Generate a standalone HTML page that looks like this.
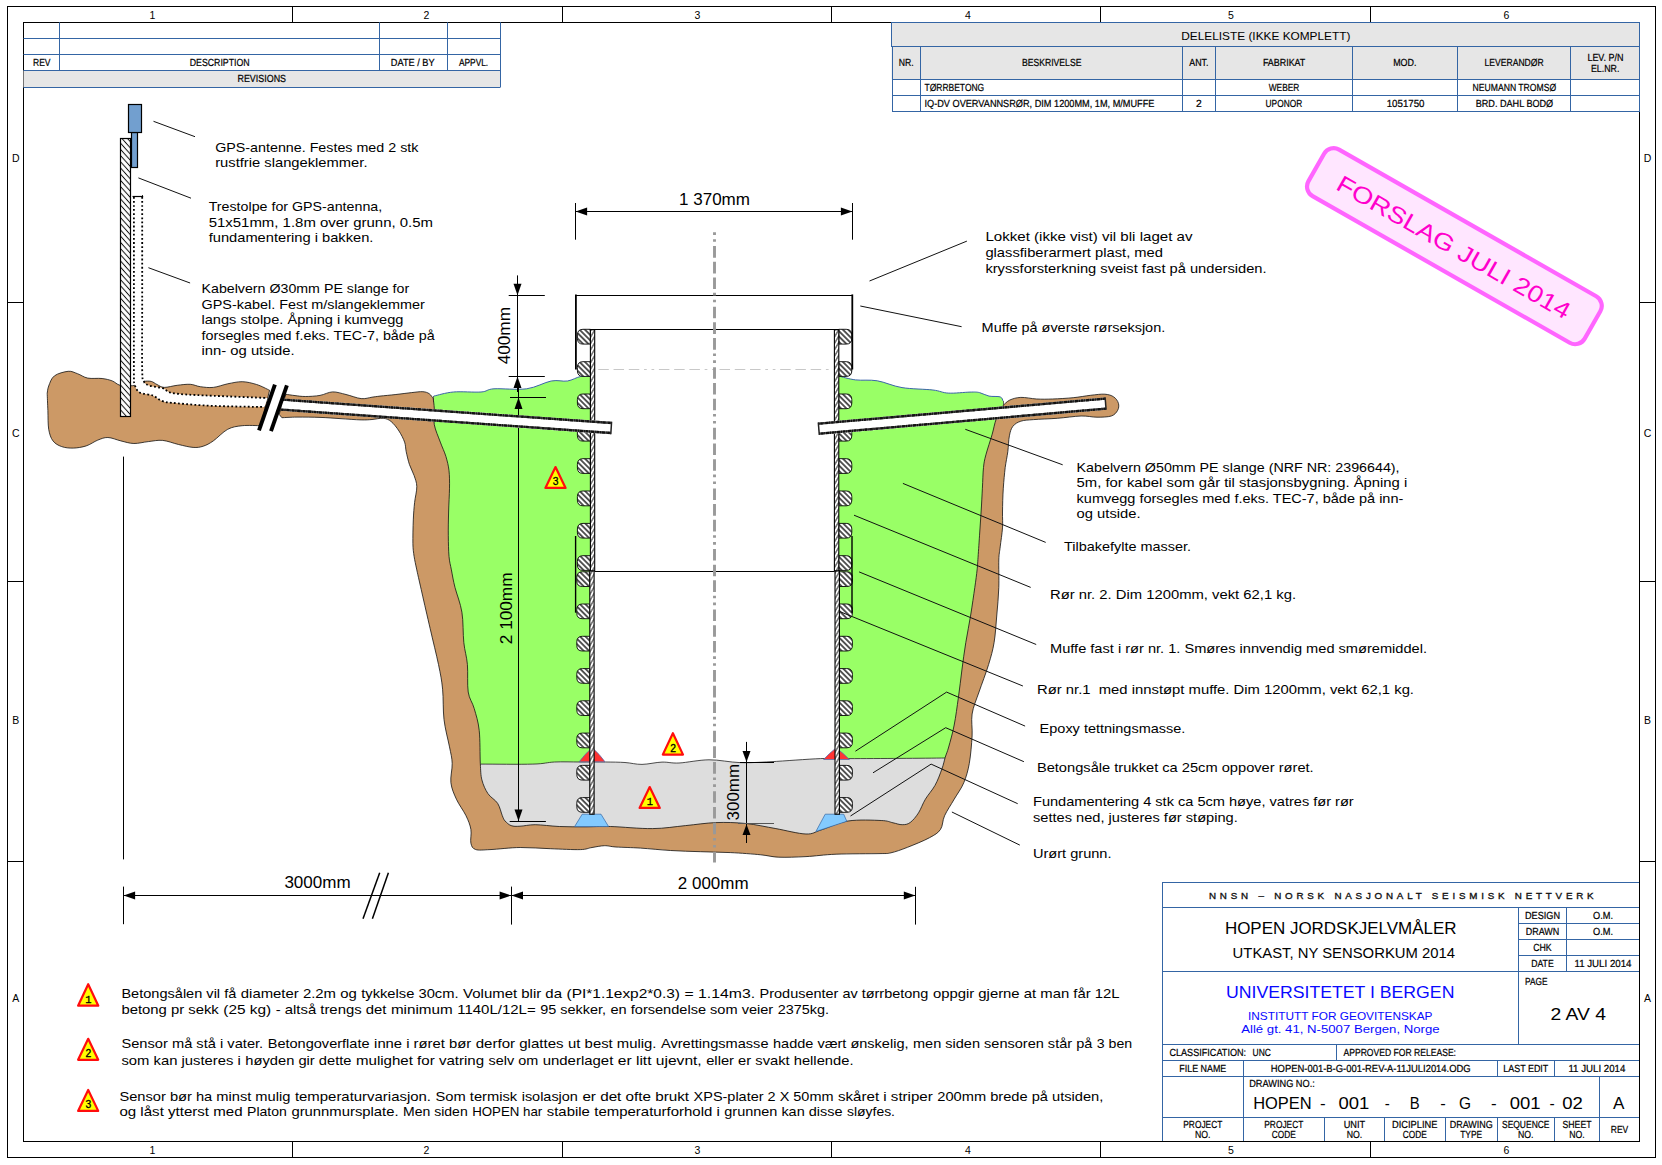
<!DOCTYPE html>
<html><head><meta charset="utf-8"><title>HOPEN sensorkum</title>
<style>
html,body{margin:0;padding:0;background:#fff;}
body{width:1662px;height:1165px;overflow:hidden;}
svg{display:block;font-family:"Liberation Sans",sans-serif;}
</style></head><body>
<svg width="1662" height="1165" viewBox="0 0 1662 1165">
<defs>
<pattern id="hR" width="3.8" height="3.8" patternUnits="userSpaceOnUse" patternTransform="rotate(-45)"><rect width="3.8" height="3.8" fill="#fff"/><line x1="1.9" y1="-1" x2="1.9" y2="5" stroke="#000" stroke-width="1.3"/></pattern>
<pattern id="hP" width="4.15" height="4.15" patternUnits="userSpaceOnUse" patternTransform="rotate(-42)"><rect width="4.15" height="4.15" fill="#fff"/><line x1="2.07" y1="-1" x2="2.07" y2="6" stroke="#111" stroke-width="1.0"/></pattern>
<pattern id="hW" width="3.2" height="3.2" patternUnits="userSpaceOnUse" patternTransform="rotate(-60)"><rect width="3.2" height="3.2" fill="#fff"/><line x1="-1" y1="1.6" x2="5" y2="1.6" stroke="#000" stroke-width="0.85"/></pattern>
</defs>
<rect width="1662" height="1165" fill="#fff"/>
<rect x="1162.5" y="882.5" width="477.0" height="259.0" fill="#fff" stroke="#3465a4" stroke-width="1" />
<line x1="1162.3" y1="907.5" x2="1639.5" y2="907.5" stroke="#3465a4" stroke-width="1" />
<line x1="1162.3" y1="971.5" x2="1639.5" y2="971.5" stroke="#3465a4" stroke-width="1" />
<line x1="1162.3" y1="1044.5" x2="1639.5" y2="1044.5" stroke="#3465a4" stroke-width="1" />
<line x1="1162.3" y1="1060.5" x2="1639.5" y2="1060.5" stroke="#3465a4" stroke-width="1" />
<line x1="1162.3" y1="1076.5" x2="1639.5" y2="1076.5" stroke="#3465a4" stroke-width="1" />
<line x1="1162.3" y1="1117.5" x2="1639.5" y2="1117.5" stroke="#3465a4" stroke-width="1" />
<line x1="1518.5" y1="907.6" x2="1518.5" y2="1044.4" stroke="#3465a4" stroke-width="1" />
<line x1="1566.5" y1="907.6" x2="1566.5" y2="971.0" stroke="#3465a4" stroke-width="1" />
<line x1="1518.5" y1="923.5" x2="1639.5" y2="923.5" stroke="#3465a4" stroke-width="1" />
<line x1="1518.5" y1="939.5" x2="1639.5" y2="939.5" stroke="#3465a4" stroke-width="1" />
<line x1="1518.5" y1="955.5" x2="1639.5" y2="955.5" stroke="#3465a4" stroke-width="1" />
<line x1="1336.5" y1="1044.4" x2="1336.5" y2="1060.4" stroke="#3465a4" stroke-width="1" />
<line x1="1243.5" y1="1060.4" x2="1243.5" y2="1076.4" stroke="#3465a4" stroke-width="1" />
<line x1="1497.5" y1="1060.4" x2="1497.5" y2="1076.4" stroke="#3465a4" stroke-width="1" />
<line x1="1554.5" y1="1060.4" x2="1554.5" y2="1076.4" stroke="#3465a4" stroke-width="1" />
<line x1="1243.5" y1="1076.4" x2="1243.5" y2="1141.0" stroke="#3465a4" stroke-width="1" />
<line x1="1599.5" y1="1076.4" x2="1599.5" y2="1141.0" stroke="#3465a4" stroke-width="1" />
<line x1="1324.5" y1="1117.4" x2="1324.5" y2="1141.0" stroke="#3465a4" stroke-width="1" />
<line x1="1384.5" y1="1117.4" x2="1384.5" y2="1141.0" stroke="#3465a4" stroke-width="1" />
<line x1="1445.5" y1="1117.4" x2="1445.5" y2="1141.0" stroke="#3465a4" stroke-width="1" />
<line x1="1497.5" y1="1117.4" x2="1497.5" y2="1141.0" stroke="#3465a4" stroke-width="1" />
<line x1="1554.5" y1="1117.4" x2="1554.5" y2="1141.0" stroke="#3465a4" stroke-width="1" />
<text x="1209.0" y="898.7" font-size="9.8" textLength="384.6" lengthAdjust="spacing" fill="#111" stroke="#111" stroke-width="0.35">NNSN – NORSK NASJONALT SEISMISK NETTVERK</text>
<text x="1224.9" y="934.0" font-size="17" textLength="231.6" lengthAdjust="spacingAndGlyphs">HOPEN JORDSKJELVMÅLER</text>
<text x="1232.6" y="958.1" font-size="15" textLength="222.4" lengthAdjust="spacingAndGlyphs">UTKAST, NY SENSORKUM 2014</text>
<text x="1226.0" y="997.8" font-size="17" textLength="228.4" lengthAdjust="spacingAndGlyphs" fill="#0808ff">UNIVERSITETET I BERGEN</text>
<text x="1248.0" y="1020.0" font-size="11.5" textLength="184.5" lengthAdjust="spacingAndGlyphs" fill="#0808ff">INSTITUTT FOR GEOVITENSKAP</text>
<text x="1241.2" y="1032.7" font-size="11.5" textLength="198.4" lengthAdjust="spacingAndGlyphs" fill="#0808ff">Allé gt. 41, N-5007 Bergen, Norge</text>
<text x="1525.0" y="918.7" font-size="10.3" textLength="35.0" lengthAdjust="spacingAndGlyphs" stroke="#000" stroke-width="0.22" text-rendering="geometricPrecision">DESIGN</text>
<text x="1593.0" y="918.7" font-size="10.3" textLength="20.0" lengthAdjust="spacingAndGlyphs" stroke="#000" stroke-width="0.22" text-rendering="geometricPrecision">O.M.</text>
<text x="1525.8" y="934.7" font-size="10.3" textLength="33.5" lengthAdjust="spacingAndGlyphs" stroke="#000" stroke-width="0.22" text-rendering="geometricPrecision">DRAWN</text>
<text x="1593.0" y="934.7" font-size="10.3" textLength="20.0" lengthAdjust="spacingAndGlyphs" stroke="#000" stroke-width="0.22" text-rendering="geometricPrecision">O.M.</text>
<text x="1533.2" y="950.7" font-size="10.3" textLength="18.5" lengthAdjust="spacingAndGlyphs" stroke="#000" stroke-width="0.22" text-rendering="geometricPrecision">CHK</text>
<text x="1531.2" y="966.7" font-size="10.3" textLength="22.5" lengthAdjust="spacingAndGlyphs" stroke="#000" stroke-width="0.22" text-rendering="geometricPrecision">DATE</text>
<text x="1574.5" y="966.7" font-size="10.3" textLength="57.0" lengthAdjust="spacingAndGlyphs" stroke="#000" stroke-width="0.22" text-rendering="geometricPrecision">11 JULI 2014</text>
<text x="1525.0" y="984.6" font-size="10.3" textLength="22.5" lengthAdjust="spacingAndGlyphs" stroke="#000" stroke-width="0.22" text-rendering="geometricPrecision">PAGE</text>
<text x="1550.5" y="1020.0" font-size="17" textLength="55.5" lengthAdjust="spacingAndGlyphs">2 AV 4</text>
<text x="1169.4" y="1055.8" font-size="10.3" textLength="76.7" lengthAdjust="spacingAndGlyphs" stroke="#000" stroke-width="0.22" text-rendering="geometricPrecision">CLASSIFICATION:</text>
<text x="1252.6" y="1055.8" font-size="10.3" textLength="18.4" lengthAdjust="spacingAndGlyphs" stroke="#000" stroke-width="0.22" text-rendering="geometricPrecision">UNC</text>
<text x="1343.5" y="1055.8" font-size="10.3" textLength="112.5" lengthAdjust="spacingAndGlyphs" stroke="#000" stroke-width="0.22" text-rendering="geometricPrecision">APPROVED FOR RELEASE:</text>
<text x="1179.3" y="1071.8" font-size="10.3" textLength="47.0" lengthAdjust="spacingAndGlyphs" stroke="#000" stroke-width="0.22" text-rendering="geometricPrecision">FILE NAME</text>
<text x="1270.8" y="1071.8" font-size="10.3" textLength="199.9" lengthAdjust="spacingAndGlyphs" stroke="#000" stroke-width="0.22" text-rendering="geometricPrecision">HOPEN-001-B-G-001-REV-A-11JULI2014.ODG</text>
<text x="1503.3" y="1071.8" font-size="10.3" textLength="45.0" lengthAdjust="spacingAndGlyphs" stroke="#000" stroke-width="0.22" text-rendering="geometricPrecision">LAST EDIT</text>
<text x="1568.4" y="1071.8" font-size="10.3" textLength="57.0" lengthAdjust="spacingAndGlyphs" stroke="#000" stroke-width="0.22" text-rendering="geometricPrecision">11 JULI 2014</text>
<text x="1249.2" y="1086.6" font-size="10.3" textLength="65.6" lengthAdjust="spacingAndGlyphs" stroke="#000" stroke-width="0.22" text-rendering="geometricPrecision">DRAWING NO.:</text>
<text x="1253.2" y="1108.8" font-size="16" textLength="58.5" lengthAdjust="spacingAndGlyphs">HOPEN</text>
<text x="1320.0" y="1108.8" font-size="16" textLength="5.6" lengthAdjust="spacingAndGlyphs">-</text>
<text x="1338.5" y="1108.8" font-size="16" textLength="30.8" lengthAdjust="spacingAndGlyphs">001</text>
<text x="1384.7" y="1108.8" font-size="16" textLength="5.0" lengthAdjust="spacingAndGlyphs">-</text>
<text x="1409.7" y="1108.8" font-size="16" textLength="9.9" lengthAdjust="spacingAndGlyphs">B</text>
<text x="1440.2" y="1108.8" font-size="16" textLength="5.5" lengthAdjust="spacingAndGlyphs">-</text>
<text x="1459.0" y="1108.8" font-size="16" textLength="12.0" lengthAdjust="spacingAndGlyphs">G</text>
<text x="1491.0" y="1108.8" font-size="16" textLength="5.6" lengthAdjust="spacingAndGlyphs">-</text>
<text x="1509.8" y="1108.8" font-size="16" textLength="30.8" lengthAdjust="spacingAndGlyphs">001</text>
<text x="1549.6" y="1108.8" font-size="16" textLength="5.2" lengthAdjust="spacingAndGlyphs">-</text>
<text x="1562.2" y="1108.8" font-size="16" textLength="20.6" lengthAdjust="spacingAndGlyphs">02</text>
<text x="1613.0" y="1108.8" font-size="16" textLength="11.4" lengthAdjust="spacingAndGlyphs">A</text>
<text x="1183.3" y="1128.0" font-size="10.3" textLength="39.0" lengthAdjust="spacingAndGlyphs" stroke="#000" stroke-width="0.22" text-rendering="geometricPrecision">PROJECT</text>
<text x="1195.0" y="1137.6" font-size="10.3" textLength="15.5" lengthAdjust="spacingAndGlyphs" stroke="#000" stroke-width="0.22" text-rendering="geometricPrecision">NO.</text>
<text x="1264.3" y="1128.0" font-size="10.3" textLength="39.0" lengthAdjust="spacingAndGlyphs" stroke="#000" stroke-width="0.22" text-rendering="geometricPrecision">PROJECT</text>
<text x="1271.8" y="1137.6" font-size="10.3" textLength="24.0" lengthAdjust="spacingAndGlyphs" stroke="#000" stroke-width="0.22" text-rendering="geometricPrecision">CODE</text>
<text x="1343.7" y="1128.0" font-size="10.3" textLength="21.5" lengthAdjust="spacingAndGlyphs" stroke="#000" stroke-width="0.22" text-rendering="geometricPrecision">UNIT</text>
<text x="1346.7" y="1137.6" font-size="10.3" textLength="15.5" lengthAdjust="spacingAndGlyphs" stroke="#000" stroke-width="0.22" text-rendering="geometricPrecision">NO.</text>
<text x="1392.0" y="1128.0" font-size="10.3" textLength="45.5" lengthAdjust="spacingAndGlyphs" stroke="#000" stroke-width="0.22" text-rendering="geometricPrecision">DICIPLINE</text>
<text x="1402.8" y="1137.6" font-size="10.3" textLength="24.0" lengthAdjust="spacingAndGlyphs" stroke="#000" stroke-width="0.22" text-rendering="geometricPrecision">CODE</text>
<text x="1449.7" y="1128.0" font-size="10.3" textLength="43.0" lengthAdjust="spacingAndGlyphs" stroke="#000" stroke-width="0.22" text-rendering="geometricPrecision">DRAWING</text>
<text x="1460.2" y="1137.6" font-size="10.3" textLength="22.0" lengthAdjust="spacingAndGlyphs" stroke="#000" stroke-width="0.22" text-rendering="geometricPrecision">TYPE</text>
<text x="1502.0" y="1128.0" font-size="10.3" textLength="47.5" lengthAdjust="spacingAndGlyphs" stroke="#000" stroke-width="0.22" text-rendering="geometricPrecision">SEQUENCE</text>
<text x="1518.0" y="1137.6" font-size="10.3" textLength="15.5" lengthAdjust="spacingAndGlyphs" stroke="#000" stroke-width="0.22" text-rendering="geometricPrecision">NO.</text>
<text x="1562.5" y="1128.0" font-size="10.3" textLength="29.0" lengthAdjust="spacingAndGlyphs" stroke="#000" stroke-width="0.22" text-rendering="geometricPrecision">SHEET</text>
<text x="1569.2" y="1137.6" font-size="10.3" textLength="15.5" lengthAdjust="spacingAndGlyphs" stroke="#000" stroke-width="0.22" text-rendering="geometricPrecision">NO.</text>
<text x="1610.8" y="1132.9" font-size="10.3" textLength="17.5" lengthAdjust="spacingAndGlyphs" stroke="#000" stroke-width="0.22" text-rendering="geometricPrecision">REV</text>
<rect x="7.5" y="6.5" width="1648.0" height="1151.0" fill="none" stroke="#000" stroke-width="1" />
<rect x="23.5" y="22.5" width="1616.0" height="1119.0" fill="none" stroke="#000" stroke-width="1" />
<line x1="292.5" y1="6.5" x2="292.5" y2="22.5" stroke="#000" stroke-width="1" />
<line x1="292.5" y1="1141.0" x2="292.5" y2="1157.5" stroke="#000" stroke-width="1" />
<line x1="562.5" y1="6.5" x2="562.5" y2="22.5" stroke="#000" stroke-width="1" />
<line x1="562.5" y1="1141.0" x2="562.5" y2="1157.5" stroke="#000" stroke-width="1" />
<line x1="831.5" y1="6.5" x2="831.5" y2="22.5" stroke="#000" stroke-width="1" />
<line x1="831.5" y1="1141.0" x2="831.5" y2="1157.5" stroke="#000" stroke-width="1" />
<line x1="1100.5" y1="6.5" x2="1100.5" y2="22.5" stroke="#000" stroke-width="1" />
<line x1="1100.5" y1="1141.0" x2="1100.5" y2="1157.5" stroke="#000" stroke-width="1" />
<line x1="1370.5" y1="6.5" x2="1370.5" y2="22.5" stroke="#000" stroke-width="1" />
<line x1="1370.5" y1="1141.0" x2="1370.5" y2="1157.5" stroke="#000" stroke-width="1" />
<line x1="7.5" y1="302.5" x2="23.5" y2="302.5" stroke="#000" stroke-width="1" />
<line x1="1639.5" y1="302.5" x2="1655.5" y2="302.5" stroke="#000" stroke-width="1" />
<line x1="7.5" y1="581.5" x2="23.5" y2="581.5" stroke="#000" stroke-width="1" />
<line x1="1639.5" y1="581.5" x2="1655.5" y2="581.5" stroke="#000" stroke-width="1" />
<line x1="7.5" y1="861.5" x2="23.5" y2="861.5" stroke="#000" stroke-width="1" />
<line x1="1639.5" y1="861.5" x2="1655.5" y2="861.5" stroke="#000" stroke-width="1" />
<text x="152.3" y="18.8" font-size="10.5" text-anchor="middle">1</text>
<text x="152.3" y="1153.6" font-size="10.5" text-anchor="middle">1</text>
<text x="426.5" y="18.8" font-size="10.5" text-anchor="middle">2</text>
<text x="426.5" y="1153.6" font-size="10.5" text-anchor="middle">2</text>
<text x="697.3" y="18.8" font-size="10.5" text-anchor="middle">3</text>
<text x="697.3" y="1153.6" font-size="10.5" text-anchor="middle">3</text>
<text x="968.0" y="18.8" font-size="10.5" text-anchor="middle">4</text>
<text x="968.0" y="1153.6" font-size="10.5" text-anchor="middle">4</text>
<text x="1231.0" y="18.8" font-size="10.5" text-anchor="middle">5</text>
<text x="1231.0" y="1153.6" font-size="10.5" text-anchor="middle">5</text>
<text x="1506.3" y="18.8" font-size="10.5" text-anchor="middle">6</text>
<text x="1506.3" y="1153.6" font-size="10.5" text-anchor="middle">6</text>
<text x="15.7" y="161.8" font-size="10.5" text-anchor="middle">D</text>
<text x="1647.6" y="161.8" font-size="10.5" text-anchor="middle">D</text>
<text x="15.7" y="437.0" font-size="10.5" text-anchor="middle">C</text>
<text x="1647.6" y="437.0" font-size="10.5" text-anchor="middle">C</text>
<text x="15.7" y="724.0" font-size="10.5" text-anchor="middle">B</text>
<text x="1647.6" y="724.0" font-size="10.5" text-anchor="middle">B</text>
<text x="15.7" y="1002.3" font-size="10.5" text-anchor="middle">A</text>
<text x="1647.6" y="1002.3" font-size="10.5" text-anchor="middle">A</text>
<rect x="23.5" y="70.4" width="476.8" height="16.9" fill="#e6e6e6" stroke="none" stroke-width="1" />
<line x1="23.5" y1="38.5" x2="500.3" y2="38.5" stroke="#3465a4" stroke-width="1" />
<line x1="23.5" y1="54.5" x2="500.3" y2="54.5" stroke="#3465a4" stroke-width="1" />
<line x1="23.5" y1="70.5" x2="500.3" y2="70.5" stroke="#3465a4" stroke-width="1" />
<line x1="23.5" y1="87.5" x2="500.3" y2="87.5" stroke="#3465a4" stroke-width="1" />
<line x1="59.5" y1="22.3" x2="59.5" y2="70.4" stroke="#3465a4" stroke-width="1" />
<line x1="379.5" y1="22.3" x2="379.5" y2="70.4" stroke="#3465a4" stroke-width="1" />
<line x1="447.5" y1="22.3" x2="447.5" y2="70.4" stroke="#3465a4" stroke-width="1" />
<line x1="500.5" y1="22.3" x2="500.5" y2="87.3" stroke="#3465a4" stroke-width="1" />
<text x="33.0" y="65.8" font-size="10.3" textLength="17.5" lengthAdjust="spacingAndGlyphs" stroke="#000" stroke-width="0.22" text-rendering="geometricPrecision">REV</text>
<text x="189.7" y="65.8" font-size="10.3" textLength="60.0" lengthAdjust="spacingAndGlyphs" stroke="#000" stroke-width="0.22" text-rendering="geometricPrecision">DESCRIPTION</text>
<text x="390.8" y="65.8" font-size="10.3" textLength="43.8" lengthAdjust="spacingAndGlyphs" stroke="#000" stroke-width="0.22" text-rendering="geometricPrecision">DATE / BY</text>
<text x="458.9" y="65.8" font-size="10.3" textLength="29.3" lengthAdjust="spacingAndGlyphs" stroke="#000" stroke-width="0.22" text-rendering="geometricPrecision">APPVL.</text>
<text x="237.5" y="82.0" font-size="10.3" textLength="48.5" lengthAdjust="spacingAndGlyphs" stroke="#000" stroke-width="0.22" text-rendering="geometricPrecision">REVISIONS</text>
<rect x="891.5" y="22.5" width="748.0" height="57.0" fill="#e6e6e6" stroke="none" stroke-width="1" />
<rect x="891.5" y="22.5" width="748.0" height="24.0" fill="none" stroke="#3465a4" stroke-width="1" />
<rect x="892.5" y="46.5" width="747.0" height="65.0" fill="none" stroke="#3465a4" stroke-width="1" />
<line x1="892.5" y1="79.5" x2="1639.5" y2="79.5" stroke="#3465a4" stroke-width="1" />
<line x1="892.5" y1="95.5" x2="1639.5" y2="95.5" stroke="#3465a4" stroke-width="1" />
<line x1="920.5" y1="46.5" x2="920.5" y2="111.2" stroke="#3465a4" stroke-width="1" />
<line x1="1182.5" y1="46.5" x2="1182.5" y2="111.2" stroke="#3465a4" stroke-width="1" />
<line x1="1215.5" y1="46.5" x2="1215.5" y2="111.2" stroke="#3465a4" stroke-width="1" />
<line x1="1352.5" y1="46.5" x2="1352.5" y2="111.2" stroke="#3465a4" stroke-width="1" />
<line x1="1457.5" y1="46.5" x2="1457.5" y2="111.2" stroke="#3465a4" stroke-width="1" />
<line x1="1570.5" y1="46.5" x2="1570.5" y2="111.2" stroke="#3465a4" stroke-width="1" />
<text x="1181.3" y="39.7" font-size="11.3" textLength="169.1" lengthAdjust="spacingAndGlyphs">DELELISTE (IKKE KOMPLETT)</text>
<text x="898.8" y="66.3" font-size="10.3" textLength="14.9" lengthAdjust="spacingAndGlyphs" stroke="#000" stroke-width="0.22" text-rendering="geometricPrecision">NR.</text>
<text x="1022.0" y="66.3" font-size="10.3" textLength="59.4" lengthAdjust="spacingAndGlyphs" stroke="#000" stroke-width="0.22" text-rendering="geometricPrecision">BESKRIVELSE</text>
<text x="1189.3" y="66.3" font-size="10.3" textLength="19.2" lengthAdjust="spacingAndGlyphs" stroke="#000" stroke-width="0.22" text-rendering="geometricPrecision">ANT.</text>
<text x="1262.9" y="66.3" font-size="10.3" textLength="42.4" lengthAdjust="spacingAndGlyphs" stroke="#000" stroke-width="0.22" text-rendering="geometricPrecision">FABRIKAT</text>
<text x="1393.2" y="66.3" font-size="10.3" textLength="23.3" lengthAdjust="spacingAndGlyphs" stroke="#000" stroke-width="0.22" text-rendering="geometricPrecision">MOD.</text>
<text x="1484.6" y="66.3" font-size="10.3" textLength="59.0" lengthAdjust="spacingAndGlyphs" stroke="#000" stroke-width="0.22" text-rendering="geometricPrecision">LEVERANDØR</text>
<text x="1587.4" y="60.9" font-size="10.3" textLength="36.1" lengthAdjust="spacingAndGlyphs" stroke="#000" stroke-width="0.22" text-rendering="geometricPrecision">LEV. P/N</text>
<text x="1591.0" y="72.2" font-size="10.3" textLength="28.4" lengthAdjust="spacingAndGlyphs" stroke="#000" stroke-width="0.22" text-rendering="geometricPrecision">EL.NR.</text>
<text x="924.5" y="91.0" font-size="10.3" textLength="59.7" lengthAdjust="spacingAndGlyphs" stroke="#000" stroke-width="0.22" text-rendering="geometricPrecision">TØRRBETONG</text>
<text x="1268.7" y="91.0" font-size="10.3" textLength="30.6" lengthAdjust="spacingAndGlyphs" stroke="#000" stroke-width="0.22" text-rendering="geometricPrecision">WEBER</text>
<text x="1472.6" y="91.0" font-size="10.3" textLength="83.5" lengthAdjust="spacingAndGlyphs" stroke="#000" stroke-width="0.22" text-rendering="geometricPrecision">NEUMANN TROMSØ</text>
<text x="924.5" y="107.1" font-size="10.3" textLength="229.9" lengthAdjust="spacingAndGlyphs" stroke="#000" stroke-width="0.22" text-rendering="geometricPrecision">IQ-DV OVERVANNSRØR, DIM 1200MM, 1M, M/MUFFE</text>
<text x="1198.8" y="107.1" font-size="10.3" text-anchor="middle" stroke="#000" stroke-width="0.22" text-rendering="geometricPrecision">2</text>
<text x="1265.6" y="107.1" font-size="10.3" textLength="36.6" lengthAdjust="spacingAndGlyphs" stroke="#000" stroke-width="0.22" text-rendering="geometricPrecision">UPONOR</text>
<text x="1386.7" y="107.1" font-size="10.3" textLength="37.8" lengthAdjust="spacingAndGlyphs" stroke="#000" stroke-width="0.22" text-rendering="geometricPrecision">1051750</text>
<text x="1475.7" y="107.1" font-size="10.3" textLength="77.5" lengthAdjust="spacingAndGlyphs" stroke="#000" stroke-width="0.22" text-rendering="geometricPrecision">BRD. DAHL BODØ</text>
<path d="M47.2,393.2C47.5,392.0 47.5,388.9 48.7,386.0C49.9,383.1 51.1,378.3 54.4,375.9C57.6,373.4 64.4,371.7 68.2,371.3C72.0,370.9 74.2,372.6 77.5,373.7C80.8,374.8 83.6,377.3 87.7,378.1C91.8,378.9 98.0,378.0 102.1,378.5C106.2,379.0 109.2,379.8 112.2,380.9C115.2,382.0 116.7,384.5 120.1,385.3C123.5,386.1 129.4,385.9 132.4,385.7C135.4,385.5 136.1,384.7 138.0,384.0C139.9,383.3 141.8,381.8 144.0,381.4C146.2,381.0 149.0,380.9 151.2,381.4C153.4,381.9 154.8,383.5 157.0,384.5C159.2,385.5 160.8,387.3 164.2,387.4C167.6,387.5 172.9,385.8 177.2,385.3C181.5,384.8 186.3,384.1 190.2,384.3C194.0,384.5 196.5,386.2 200.3,386.7C204.2,387.2 208.7,387.9 213.3,387.4C217.9,386.9 222.9,384.8 227.7,383.8C232.5,382.9 237.4,381.6 242.2,381.7C247.0,381.8 252.0,383.1 256.6,384.5C261.2,385.9 267.4,389.3 269.6,390.3L260.9,425.7C257.8,425.7 247.7,425.1 242.2,425.7C236.7,426.3 232.5,426.8 227.7,429.3C222.9,431.8 217.4,438.1 213.3,440.9C209.2,443.7 206.6,445.1 203.2,446.2C199.8,447.3 197.2,447.7 193.1,447.4C189.0,447.1 183.7,445.7 178.6,444.5C173.5,443.3 167.8,440.9 162.7,440.4C157.6,439.9 153.1,441.1 148.3,441.6C143.5,442.1 138.5,443.6 133.9,443.5C129.3,443.4 125.2,441.9 120.9,440.9C116.6,439.9 111.8,437.6 107.9,437.5C104.1,437.4 101.4,438.7 97.8,440.1C94.2,441.5 90.3,444.6 86.2,445.9C82.1,447.2 77.3,448.0 73.2,448.1C69.1,448.2 65.1,447.8 61.7,446.6C58.3,445.4 55.2,443.8 53.0,440.9C50.8,438.0 49.6,434.4 48.7,429.3C47.9,424.2 48.1,416.5 47.9,410.5C47.6,404.5 47.3,396.1 47.2,393.2Z" fill="#cc9966" stroke="#111" stroke-width="0.8" />
<path d="M433.8,396.1C437.1,395.4 445.5,392.7 453.4,392.0C461.3,391.3 474.2,392.5 481.0,392.0C487.8,391.5 486.4,389.3 494.0,388.8C501.6,388.3 517.2,390.1 526.7,388.8C536.2,387.5 544.4,382.3 551.2,381.0C558.0,379.7 562.6,381.8 567.5,381.0C572.4,380.2 576.8,377.2 580.6,376.5C584.4,375.8 588.8,376.5 590.4,376.5L590.4,764 L466,768 L457,700 L440,600 L432,480 L420,430 L425,402 L433.8,400 Z" fill="#99ff66" stroke="none" stroke-width="1" />
<path d="M433.8,396.1C437.1,395.4 445.5,392.7 453.4,392.0C461.3,391.3 474.2,392.5 481.0,392.0C487.8,391.5 486.4,389.3 494.0,388.8C501.6,388.3 517.2,390.1 526.7,388.8C536.2,387.5 544.4,382.3 551.2,381.0C558.0,379.7 562.6,381.8 567.5,381.0C572.4,380.2 576.8,377.2 580.6,376.5C584.4,375.8 588.8,376.5 590.4,376.5" fill="none" stroke="#3c64aa" stroke-width="1.0" />
<path d="M838.8,376.1C841.6,376.7 849.2,379.1 855.6,379.9C862.0,380.7 869.6,379.5 877.3,380.8C885.0,382.1 892.7,386.1 902.0,387.6C911.3,389.1 925.2,389.1 932.9,390.0C940.6,390.9 942.1,392.8 948.3,393.1C954.5,393.5 964.8,392.2 970.0,392.1C975.2,392.0 976.3,391.9 979.5,392.6C982.7,393.3 985.5,395.4 989.0,396.1C992.5,396.8 997.9,396.1 1000.2,396.9C1002.5,397.7 1002.5,399.4 1003.0,400.9C1003.5,402.3 1003.0,404.8 1003.0,405.6L1001,430 L991,520 L986,600 L968,700 L955,770 L838.8,762 Z" fill="#99ff66" stroke="none" stroke-width="1" />
<path d="M838.8,376.1C841.6,376.7 849.2,379.1 855.6,379.9C862.0,380.7 869.6,379.5 877.3,380.8C885.0,382.1 892.7,386.1 902.0,387.6C911.3,389.1 925.2,389.1 932.9,390.0C940.6,390.9 942.1,392.8 948.3,393.1C954.5,393.5 964.8,392.2 970.0,392.1C975.2,392.0 976.3,391.9 979.5,392.6C982.7,393.3 985.5,395.4 989.0,396.1C992.5,396.8 997.9,396.1 1000.2,396.9C1002.5,397.7 1002.5,400.2 1003.0,400.9" fill="none" stroke="#3c64aa" stroke-width="1.0" />
<line x1="1003.5" y1="401.0" x2="1003.5" y2="405.6" stroke="#222" stroke-width="0.7" />
<line x1="433.5" y1="396.1" x2="433.5" y2="403.0" stroke="#222" stroke-width="0.7" />
<path d="M466.0,764.3C468.5,764.3 469.9,764.1 481.0,764.1C492.1,764.1 520.6,764.5 532.9,764.1C545.1,763.8 546.6,762.4 554.5,762.0C562.4,761.6 571.5,762.0 580.0,762.0C588.5,762.0 598.0,761.9 605.5,762.0C613.0,762.1 618.9,762.1 625.0,762.5C631.1,762.9 635.8,764.5 642.0,764.4C648.2,764.3 655.8,762.3 662.0,762.1C668.2,761.9 671.2,763.4 679.0,763.0C686.8,762.6 698.8,759.9 709.0,759.8C719.2,759.7 729.7,762.3 740.0,762.6C750.3,762.9 757.6,762.4 771.0,761.7C784.4,761.0 807.5,759.1 820.5,758.6C833.5,758.1 835.8,758.6 849.0,758.6C862.2,758.6 883.9,758.5 900.0,758.4C916.1,758.3 936.0,758.1 945.7,758.0C955.4,757.9 956.0,758.0 958.0,758.0L952,775 L940,800 L920,832 L805,845 L700,838 L500,838 L488,834 L481,800 L466,768 Z" fill="#dddddd" stroke="none" stroke-width="1" />
<path d="M466.0,764.3C468.5,764.3 469.9,764.1 481.0,764.1C492.1,764.1 520.6,764.5 532.9,764.1C545.1,763.8 546.6,762.4 554.5,762.0C562.4,761.6 571.5,762.0 580.0,762.0C588.5,762.0 598.0,761.9 605.5,762.0C613.0,762.1 618.9,762.1 625.0,762.5C631.1,762.9 635.8,764.5 642.0,764.4C648.2,764.3 655.8,762.3 662.0,762.1C668.2,761.9 671.2,763.4 679.0,763.0C686.8,762.6 698.8,759.9 709.0,759.8C719.2,759.7 729.7,762.3 740.0,762.6C750.3,762.9 757.6,762.4 771.0,761.7C784.4,761.0 807.5,759.1 820.5,758.6C833.5,758.1 835.8,758.6 849.0,758.6C862.2,758.6 883.9,758.5 900.0,758.4C916.1,758.3 936.0,758.1 945.7,758.0C955.4,757.9 956.0,758.0 958.0,758.0" fill="none" stroke="#222" stroke-width="0.8" />
<path d="M285.8,394.3C287.3,394.5 291.8,395.2 295.0,395.6C298.2,396.0 301.1,396.5 305.3,396.5C309.5,396.5 315.4,396.2 320.0,395.4C324.6,394.6 328.4,392.0 332.7,391.9C337.0,391.8 341.2,393.4 346.0,394.5C350.8,395.6 356.9,398.2 361.2,398.6C365.5,399.1 368.9,397.6 372.0,397.2C375.1,396.8 376.0,396.6 380.0,396.1C384.0,395.7 390.6,395.1 395.9,394.5C401.2,393.9 407.2,393.1 411.7,392.6C416.2,392.1 420.0,391.5 422.9,391.7C425.8,391.9 427.5,392.6 429.2,393.7C430.9,394.8 432.5,397.7 433.2,398.5C433.4,400.2 434.1,404.4 434.3,408.8C434.5,413.2 433.3,419.1 434.3,424.7C435.3,430.2 438.4,436.8 440.3,442.1C442.2,447.4 444.4,451.6 445.9,456.4C447.3,461.2 448.4,465.4 449.0,470.7C449.6,476.0 449.6,481.3 449.5,488.2C449.4,495.1 448.8,504.1 448.6,512.0C448.4,519.9 448.2,528.4 448.3,535.8C448.4,543.2 448.5,550.7 449.0,556.4C449.5,562.1 450.4,564.7 451.4,569.9C452.4,575.1 453.2,580.5 455.0,587.5C456.8,594.5 460.4,603.0 461.9,612.2C463.4,621.4 462.9,633.8 463.8,642.5C464.7,651.2 466.7,656.2 467.4,664.5C468.1,672.8 467.1,684.7 468.2,692.0C469.3,699.3 472.4,702.1 474.2,708.5C476.0,714.9 478.2,721.2 479.2,730.4C480.2,739.5 479.9,755.1 480.3,763.4C480.8,771.6 480.6,774.8 481.9,779.9C483.2,785.0 485.4,789.8 488.0,793.7C490.6,797.6 495.2,799.6 497.6,803.3C500.0,807.0 501.1,812.8 502.3,815.7C503.6,818.7 503.6,819.4 505.1,821.0C506.6,822.6 508.6,824.7 511.1,825.6C513.6,826.5 516.0,826.4 520.0,826.2C524.0,826.1 528.7,824.7 535.2,824.7C541.8,824.8 551.0,826.1 559.3,826.5C567.6,826.9 576.5,826.8 585.0,826.8C593.5,826.8 599.1,826.2 610.4,826.5C621.6,826.8 640.0,828.8 652.5,828.6C665.0,828.5 675.1,826.6 685.6,825.6C696.1,824.6 705.7,823.0 715.7,822.6C725.7,822.2 735.8,822.5 745.8,823.5C755.8,824.5 765.9,826.9 775.9,828.6C785.9,830.4 798.5,833.8 806.0,834.0C813.5,834.2 814.0,832.2 821.0,830.0C828.0,827.8 838.1,822.6 848.1,821.0C858.1,819.4 873.7,820.2 881.2,820.5C888.7,820.8 889.5,822.1 893.0,822.8C896.5,823.5 899.3,824.8 902.2,824.7C905.1,824.7 907.5,824.5 910.2,822.5C912.9,820.5 916.0,816.8 918.5,812.9C921.0,809.0 922.6,803.8 925.4,799.2C928.1,794.6 932.2,790.4 935.0,785.4C937.8,780.4 940.2,773.7 941.9,769.0C943.6,764.3 944.1,761.1 945.2,757.4C946.3,753.7 947.2,752.4 948.7,747.0C950.2,741.6 952.6,733.2 954.2,725.0C955.8,716.8 957.1,706.7 958.4,697.5C959.7,688.3 960.7,679.2 961.9,670.0C963.1,660.8 964.3,651.7 965.8,642.5C967.3,633.3 969.2,624.2 970.7,615.0C972.2,605.8 973.7,595.0 974.8,587.5C975.9,580.0 976.6,574.5 977.1,569.9C977.6,565.2 977.5,565.3 977.9,559.6C978.3,553.9 979.0,543.7 979.5,535.8C980.0,527.9 980.6,519.9 981.1,512.0C981.6,504.1 982.0,495.6 982.4,488.2C982.8,480.8 982.9,473.1 983.5,467.5C984.1,461.9 984.4,460.4 985.9,454.8C987.4,449.2 990.5,440.1 992.2,434.2C993.9,428.2 994.4,423.9 996.2,419.1C998.0,414.3 1001.9,407.9 1003.0,405.6C1004.1,404.7 1006.7,401.5 1009.7,400.1C1012.7,398.7 1016.3,397.6 1020.8,397.4C1025.3,397.2 1031.4,398.7 1036.7,399.0C1042.0,399.3 1046.4,399.2 1052.5,399.0C1058.6,398.8 1066.9,398.3 1073.2,397.7C1079.5,397.1 1085.3,395.9 1090.6,395.3C1095.9,394.7 1101.1,393.9 1104.9,394.2C1108.8,394.5 1111.5,395.4 1113.7,396.9C1116.0,398.4 1117.8,401.1 1118.4,403.3C1119.1,405.6 1118.8,408.3 1117.6,410.4C1116.4,412.5 1114.7,414.9 1111.3,416.0C1107.9,417.1 1102.0,417.2 1097.0,417.2C1092.0,417.2 1087.7,415.8 1081.1,416.0C1074.5,416.2 1065.2,417.7 1057.3,418.3C1049.4,418.9 1039.6,419.1 1033.5,419.6C1027.4,420.1 1024.2,420.1 1020.8,421.2C1017.4,422.3 1014.8,423.9 1012.9,426.3C1011.0,428.7 1010.2,431.6 1009.4,435.8C1008.5,440.0 1008.5,446.4 1007.8,451.7C1007.1,457.0 1006.0,461.4 1005.2,467.5C1004.5,473.6 1003.8,480.8 1003.3,488.2C1002.8,495.6 1002.6,505.4 1002.5,512.0C1002.4,518.6 1002.9,522.1 1002.5,527.9C1002.1,533.7 1000.8,541.5 1000.2,546.9C999.6,552.2 999.0,553.2 998.8,560.0C998.6,566.8 999.1,578.3 998.8,587.5C998.5,596.7 997.6,605.8 996.8,615.0C996.0,624.2 995.5,634.2 994.1,642.5C992.7,650.8 991.1,656.2 988.6,664.5C986.1,672.8 981.8,683.8 979.0,692.0C976.2,700.2 973.2,706.7 972.1,714.0C971.0,721.3 972.6,727.8 972.1,736.0C971.6,744.2 970.7,755.6 969.3,763.4C967.9,771.2 966.3,776.7 963.8,782.7C961.3,788.7 957.4,793.7 954.2,799.2C951.0,804.7 946.9,810.7 944.6,815.7C942.3,820.7 943.0,825.7 940.5,829.4C938.0,833.1 935.0,834.7 929.5,837.7C924.0,840.7 913.9,844.8 907.5,847.3C901.1,849.8 895.6,851.8 891.0,852.8C886.4,853.8 889.1,853.4 880.0,853.6C870.9,853.8 848.4,853.7 836.1,854.2C823.8,854.7 815.5,856.1 806.0,856.6C796.5,857.1 786.4,857.5 778.9,857.2C771.4,856.9 768.8,855.6 760.8,854.8C752.8,854.0 740.8,853.1 730.8,852.6C720.8,852.1 710.7,852.1 700.7,851.7C690.7,851.4 680.6,851.1 670.6,850.5C660.6,849.9 649.6,848.7 640.5,848.1C631.4,847.5 622.0,847.4 616.0,847.0C610.0,846.6 608.4,845.6 604.4,845.7C600.4,845.8 596.0,846.9 592.0,847.5C588.0,848.1 587.2,849.4 580.3,849.6C573.3,849.8 560.3,849.1 550.3,848.7C540.3,848.4 530.2,847.4 520.2,847.5C510.2,847.6 497.4,849.3 490.0,849.6C482.6,849.9 478.8,850.6 475.6,849.5C472.4,848.4 471.7,846.6 470.9,843.2C470.1,839.9 471.7,834.0 470.9,829.4C470.1,824.8 468.4,820.7 466.0,815.7C463.6,810.7 458.9,804.7 456.4,799.2C453.9,793.7 451.6,788.7 450.9,782.7C450.2,776.7 452.4,769.4 452.2,763.4C452.0,757.4 450.9,754.2 449.5,746.9C448.1,739.6 445.1,729.1 444.0,719.5C442.9,709.9 443.5,698.4 442.6,689.2C441.7,680.0 440.6,674.6 438.5,664.5C436.4,654.4 432.9,640.6 430.2,628.7C427.4,616.8 424.2,602.8 422.0,593.0C419.8,583.2 418.1,576.0 416.8,569.9C415.5,563.8 414.8,560.8 414.1,556.4C413.5,552.0 413.0,549.8 412.9,543.7C412.8,537.6 413.0,526.8 413.3,519.9C413.6,513.0 414.0,508.1 414.6,502.5C415.2,496.9 416.9,491.1 416.8,486.6C416.7,482.1 415.3,479.2 414.1,475.5C412.9,471.8 410.7,468.4 409.4,464.4C408.1,460.4 407.0,455.4 406.2,451.7C405.4,448.0 405.8,445.6 404.6,442.1C403.4,438.7 401.2,434.4 399.0,431.0C396.8,427.6 393.7,423.6 391.1,421.5C388.5,419.4 386.4,418.6 383.2,418.3C380.0,418.0 375.7,419.2 372.0,419.5C368.3,419.8 366.5,420.0 361.2,419.9C355.9,419.8 346.9,419.0 340.0,418.6C333.1,418.2 327.2,417.6 320.0,417.4C312.8,417.1 303.4,417.1 297.0,417.1C290.6,417.2 284.4,417.6 281.9,417.7L279.1,414.3 Z" fill="#cc9966" stroke="#111" stroke-width="0.8" />
<path d="M133.9,197.0C133.9,214.2 133.9,270.8 133.9,300.0C133.9,329.2 133.8,358.0 133.9,372.0C134.0,386.0 133.7,380.6 134.6,384.0C135.5,387.4 136.6,390.6 139.6,392.5C142.6,394.4 148.8,393.9 152.6,395.4C156.4,396.8 158.6,399.9 162.7,401.2C166.8,402.5 168.8,402.5 177.2,403.3C185.6,404.1 198.8,405.3 213.3,405.9C227.9,406.5 256.0,406.8 264.5,407.0L267.5,398.0C258.5,397.6 227.2,396.4 213.3,395.8C199.5,395.2 191.6,394.9 184.4,394.4C177.2,393.8 173.6,393.5 170.0,392.5C166.4,391.5 166.1,389.3 162.7,388.2C159.3,387.1 152.8,386.8 149.7,385.7C146.6,384.6 145.2,384.3 144.0,381.7C142.8,379.1 142.5,383.6 142.2,370.0C141.9,356.4 142.2,328.8 142.2,300.0C142.2,271.2 142.2,214.2 142.2,197.0Z" fill="#fff" stroke="none" stroke-width="1" />
<rect x="120.5" y="138.5" width="10.0" height="278.0" fill="url(#hP)" stroke="#000" stroke-width="1.2" />
<path d="M133.9,197.0C133.9,214.2 133.9,270.8 133.9,300.0C133.9,329.2 133.8,358.0 133.9,372.0C134.0,386.0 133.7,380.6 134.6,384.0C135.5,387.4 136.6,390.6 139.6,392.5C142.6,394.4 148.8,393.9 152.6,395.4C156.4,396.8 158.6,399.9 162.7,401.2C166.8,402.5 168.8,402.5 177.2,403.3C185.6,404.1 198.8,405.3 213.3,405.9C227.9,406.5 256.0,406.8 264.5,407.0" fill="none" stroke="#000" stroke-width="1.8" stroke-dasharray="1.8 2.3"/>
<path d="M142.2,197.0C142.2,214.2 142.2,271.2 142.2,300.0C142.2,328.8 141.9,356.4 142.2,370.0C142.5,383.6 142.8,379.1 144.0,381.7C145.2,384.3 146.6,384.6 149.7,385.7C152.8,386.8 159.3,387.1 162.7,388.2C166.1,389.3 166.4,391.5 170.0,392.5C173.6,393.5 177.2,393.8 184.4,394.4C191.6,394.9 199.5,395.2 213.3,395.8C227.2,396.4 258.5,397.6 267.5,398.0" fill="none" stroke="#000" stroke-width="1.8" stroke-dasharray="1.8 2.3"/>
<line x1="132.5" y1="196.5" x2="143.2" y2="196.5" stroke="#000" stroke-width="1.2" />
<line x1="142.5" y1="195.2" x2="142.5" y2="198.0" stroke="#000" stroke-width="1" />
<rect x="131.5" y="132.5" width="6.0" height="35.0" fill="#729fcf" stroke="#000" stroke-width="1.2" />
<rect x="128.5" y="104.5" width="13.0" height="28.0" fill="#729fcf" stroke="#000" stroke-width="1.2" />
<line x1="123.5" y1="456.6" x2="123.5" y2="859.4" stroke="#000" stroke-width="1" />
<path d="M579.2,761.8 Q586,753 590.6,749.2 Q592.2,748.4 593.8,749.2 Q598.5,753 605,761.8 Z" fill="#ff3333" stroke="#4a6ab0" stroke-width="0.7" />
<path d="M823.6,759.5 Q830,752.5 834.6,749.2 Q836.2,748.4 837.8,749.2 Q842.5,752.5 849.4,759.5 Z" fill="#ff3333" stroke="#4a6ab0" stroke-width="0.7" />
<polygon points="582.2,814.2 601.0,814.2 608.6,826.6 574.6,826.6" fill="#83caff" stroke="#3465a4" stroke-width="0.7" />
<polygon points="825.2,814.2 843.7,814.2 846.8,821.3 815.9,831.5" fill="#83caff" stroke="#3465a4" stroke-width="0.7" />
<path d="M590.4,329.3L583.0,329.3Q577.4,329.3 577.4,334.9L577.4,338.4Q577.4,344.1 583.0,344.1L590.4,344.1Z" fill="url(#hR)" stroke="#111" stroke-width="0.95" />
<path d="M838.8,329.3L846.2,329.3Q851.8,329.3 851.8,334.9L851.8,338.4Q851.8,344.1 846.2,344.1L838.8,344.1Z" fill="url(#hR)" stroke="#111" stroke-width="0.95" />
<path d="M589.8,571.8L582.4,571.8Q576.8,571.8 576.8,577.4L576.8,580.9Q576.8,586.5 582.4,586.5L589.8,586.5Z" fill="url(#hR)" stroke="#111" stroke-width="0.95" />
<path d="M839.4,571.8L846.8,571.8Q852.4,571.8 852.4,577.4L852.4,580.9Q852.4,586.5 846.8,586.5L839.4,586.5Z" fill="url(#hR)" stroke="#111" stroke-width="0.95" />
<path d="M590.4,361.7L583.0,361.7Q577.4,361.7 577.4,367.3L577.4,370.8Q577.4,376.4 583.0,376.4L590.4,376.4Z" fill="url(#hR)" stroke="#111" stroke-width="0.95" />
<path d="M838.8,361.7L846.2,361.7Q851.8,361.7 851.8,367.3L851.8,370.8Q851.8,376.4 846.2,376.4L838.8,376.4Z" fill="url(#hR)" stroke="#111" stroke-width="0.95" />
<path d="M589.8,604.0L582.4,604.0Q576.8,604.0 576.8,609.6L576.8,613.1Q576.8,618.7 582.4,618.7L589.8,618.7Z" fill="url(#hR)" stroke="#111" stroke-width="0.95" />
<path d="M839.4,604.0L846.8,604.0Q852.4,604.0 852.4,609.6L852.4,613.1Q852.4,618.7 846.8,618.7L839.4,618.7Z" fill="url(#hR)" stroke="#111" stroke-width="0.95" />
<path d="M590.4,394.0L583.0,394.0Q577.4,394.0 577.4,399.6L577.4,403.1Q577.4,408.7 583.0,408.7L590.4,408.7Z" fill="url(#hR)" stroke="#111" stroke-width="0.95" />
<path d="M838.8,394.0L846.2,394.0Q851.8,394.0 851.8,399.6L851.8,403.1Q851.8,408.7 846.2,408.7L838.8,408.7Z" fill="url(#hR)" stroke="#111" stroke-width="0.95" />
<path d="M589.8,636.3L582.4,636.3Q576.8,636.3 576.8,641.9L576.8,645.4Q576.8,651.0 582.4,651.0L589.8,651.0Z" fill="url(#hR)" stroke="#111" stroke-width="0.95" />
<path d="M839.4,636.3L846.8,636.3Q852.4,636.3 852.4,641.9L852.4,645.4Q852.4,651.0 846.8,651.0L839.4,651.0Z" fill="url(#hR)" stroke="#111" stroke-width="0.95" />
<path d="M590.4,426.4L583.0,426.4Q577.4,426.4 577.4,432.0L577.4,435.5Q577.4,441.1 583.0,441.1L590.4,441.1Z" fill="url(#hR)" stroke="#111" stroke-width="0.95" />
<path d="M838.8,426.4L846.2,426.4Q851.8,426.4 851.8,432.0L851.8,435.5Q851.8,441.1 846.2,441.1L838.8,441.1Z" fill="url(#hR)" stroke="#111" stroke-width="0.95" />
<path d="M589.8,668.6L582.4,668.6Q576.8,668.6 576.8,674.2L576.8,677.7Q576.8,683.3 582.4,683.3L589.8,683.3Z" fill="url(#hR)" stroke="#111" stroke-width="0.95" />
<path d="M839.4,668.6L846.8,668.6Q852.4,668.6 852.4,674.2L852.4,677.7Q852.4,683.3 846.8,683.3L839.4,683.3Z" fill="url(#hR)" stroke="#111" stroke-width="0.95" />
<path d="M590.4,458.7L583.0,458.7Q577.4,458.7 577.4,464.3L577.4,467.8Q577.4,473.4 583.0,473.4L590.4,473.4Z" fill="url(#hR)" stroke="#111" stroke-width="0.95" />
<path d="M838.8,458.7L846.2,458.7Q851.8,458.7 851.8,464.3L851.8,467.8Q851.8,473.4 846.2,473.4L838.8,473.4Z" fill="url(#hR)" stroke="#111" stroke-width="0.95" />
<path d="M589.8,700.8L582.4,700.8Q576.8,700.8 576.8,706.4L576.8,709.9Q576.8,715.5 582.4,715.5L589.8,715.5Z" fill="url(#hR)" stroke="#111" stroke-width="0.95" />
<path d="M839.4,700.8L846.8,700.8Q852.4,700.8 852.4,706.4L852.4,709.9Q852.4,715.5 846.8,715.5L839.4,715.5Z" fill="url(#hR)" stroke="#111" stroke-width="0.95" />
<path d="M590.4,491.0L583.0,491.0Q577.4,491.0 577.4,496.6L577.4,500.1Q577.4,505.8 583.0,505.8L590.4,505.8Z" fill="url(#hR)" stroke="#111" stroke-width="0.95" />
<path d="M838.8,491.0L846.2,491.0Q851.8,491.0 851.8,496.6L851.8,500.1Q851.8,505.8 846.2,505.8L838.8,505.8Z" fill="url(#hR)" stroke="#111" stroke-width="0.95" />
<path d="M589.8,733.1L582.4,733.1Q576.8,733.1 576.8,738.7L576.8,742.2Q576.8,747.8 582.4,747.8L589.8,747.8Z" fill="url(#hR)" stroke="#111" stroke-width="0.95" />
<path d="M839.4,733.1L846.8,733.1Q852.4,733.1 852.4,738.7L852.4,742.2Q852.4,747.8 846.8,747.8L839.4,747.8Z" fill="url(#hR)" stroke="#111" stroke-width="0.95" />
<path d="M590.4,523.4L583.0,523.4Q577.4,523.4 577.4,529.0L577.4,532.5Q577.4,538.1 583.0,538.1L590.4,538.1Z" fill="url(#hR)" stroke="#111" stroke-width="0.95" />
<path d="M838.8,523.4L846.2,523.4Q851.8,523.4 851.8,529.0L851.8,532.5Q851.8,538.1 846.2,538.1L838.8,538.1Z" fill="url(#hR)" stroke="#111" stroke-width="0.95" />
<path d="M589.8,765.4L582.4,765.4Q576.8,765.4 576.8,771.0L576.8,774.5Q576.8,780.1 582.4,780.1L589.8,780.1Z" fill="url(#hR)" stroke="#111" stroke-width="0.95" />
<path d="M839.4,765.4L846.8,765.4Q852.4,765.4 852.4,771.0L852.4,774.5Q852.4,780.1 846.8,780.1L839.4,780.1Z" fill="url(#hR)" stroke="#111" stroke-width="0.95" />
<path d="M590.4,555.7L583.0,555.7Q577.4,555.7 577.4,561.3L577.4,564.8Q577.4,570.4 583.0,570.4L590.4,570.4Z" fill="url(#hR)" stroke="#111" stroke-width="0.95" />
<path d="M838.8,555.7L846.2,555.7Q851.8,555.7 851.8,561.3L851.8,564.8Q851.8,570.4 846.2,570.4L838.8,570.4Z" fill="url(#hR)" stroke="#111" stroke-width="0.95" />
<path d="M589.8,797.6L582.4,797.6Q576.8,797.6 576.8,803.2L576.8,806.7Q576.8,812.3 582.4,812.3L589.8,812.3Z" fill="url(#hR)" stroke="#111" stroke-width="0.95" />
<path d="M839.4,797.6L846.8,797.6Q852.4,797.6 852.4,803.2L852.4,806.7Q852.4,812.3 846.8,812.3L839.4,812.3Z" fill="url(#hR)" stroke="#111" stroke-width="0.95" />
<rect x="590.4" y="329.7" width="4.3" height="241.3" fill="url(#hW)" stroke="#000" stroke-width="1.1"/>
<rect x="589.8" y="571" width="4.3" height="243.2" fill="url(#hW)" stroke="#000" stroke-width="1.1"/>
<rect x="834.4" y="329.7" width="4.4" height="241.3" fill="url(#hW)" stroke="#000" stroke-width="1.1"/>
<rect x="835.0" y="571" width="4.4" height="243.2" fill="url(#hW)" stroke="#000" stroke-width="1.1"/>
<line x1="590.4" y1="329.5" x2="838.8" y2="329.5" stroke="#000" stroke-width="1.2" />
<line x1="594.7" y1="571.5" x2="834.4" y2="571.5" stroke="#000" stroke-width="1.0" />
<line x1="575.6" y1="536.0" x2="575.6" y2="612.7" stroke="#000" stroke-width="1.4" />
<line x1="852.0" y1="536.0" x2="852.0" y2="612.7" stroke="#000" stroke-width="1.4" />
<line x1="575.9" y1="369.5" x2="575.9" y2="294.4" stroke="#000" stroke-width="1.8" />
<line x1="852.3" y1="369.5" x2="852.3" y2="294.4" stroke="#000" stroke-width="1.8" />
<line x1="575.9" y1="295.5" x2="852.3" y2="295.5" stroke="#000" stroke-width="1.2" />
<line x1="598.3" y1="369.5" x2="834.0" y2="369.5" stroke="#c8c8c8" stroke-width="1" stroke-dasharray="10.5 4.75 10.5 4.75 10.5 4.75 2.7 4.75 2.7 4.72"/>
<line x1="575.5" y1="203.0" x2="575.5" y2="239.7" stroke="#000" stroke-width="1" />
<line x1="852.5" y1="203.0" x2="852.5" y2="239.7" stroke="#000" stroke-width="1" />
<line x1="575.4" y1="211.5" x2="852.6" y2="211.5" stroke="#000" stroke-width="1.2" />
<polygon points="575.6,211.5 587.1,207.5 587.1,215.5" fill="#000" stroke="none" stroke-width="1" />
<polygon points="852.4,211.5 840.9,215.5 840.9,207.5" fill="#000" stroke="none" stroke-width="1" />
<line x1="517.5" y1="275.4" x2="517.5" y2="392.0" stroke="#000" stroke-width="1" />
<line x1="518.5" y1="386.0" x2="518.5" y2="821.3" stroke="#000" stroke-width="1" />
<line x1="508.7" y1="295.5" x2="544.8" y2="295.5" stroke="#000" stroke-width="1" />
<line x1="508.7" y1="376.5" x2="544.8" y2="376.5" stroke="#000" stroke-width="1" />
<line x1="510.0" y1="397.5" x2="546.0" y2="397.5" stroke="#000" stroke-width="1" />
<line x1="509.7" y1="821.5" x2="545.9" y2="821.5" stroke="#000" stroke-width="1" />
<polygon points="517.5,295.3 513.5,283.8 521.5,283.8" fill="#000" stroke="none" stroke-width="1" />
<polygon points="517.5,376.6 521.5,388.1 513.5,388.1" fill="#000" stroke="none" stroke-width="1" />
<polygon points="518.5,397.4 522.5,408.9 514.5,408.9" fill="#000" stroke="none" stroke-width="1" />
<polygon points="518.5,821.1 514.5,809.6 522.5,809.6" fill="#000" stroke="none" stroke-width="1" />
<line x1="746.5" y1="741.9" x2="746.5" y2="843.0" stroke="#000" stroke-width="1" />
<line x1="740.0" y1="762.5" x2="774.0" y2="762.5" stroke="#000" stroke-width="1" />
<line x1="738.0" y1="823.5" x2="774.0" y2="823.5" stroke="#555" stroke-width="1" />
<polygon points="746.5,762.0 742.5,751.0 750.5,751.0" fill="#000" stroke="none" stroke-width="1" />
<polygon points="746.5,824.3 750.5,834.9 742.5,834.9" fill="#000" stroke="none" stroke-width="1" />
<line x1="123.5" y1="886.6" x2="123.5" y2="924.2" stroke="#000" stroke-width="1" />
<line x1="511.5" y1="886.6" x2="511.5" y2="924.6" stroke="#000" stroke-width="1" />
<line x1="915.5" y1="886.8" x2="915.5" y2="924.6" stroke="#000" stroke-width="1" />
<line x1="123.4" y1="895.5" x2="915.5" y2="895.5" stroke="#000" stroke-width="1.2" />
<polygon points="123.6,895.5 135.1,891.5 135.1,899.5" fill="#000" stroke="none" stroke-width="1" />
<polygon points="511.1,895.5 499.6,899.5 499.6,891.5" fill="#000" stroke="none" stroke-width="1" />
<polygon points="511.5,895.5 523.0,891.5 523.0,899.5" fill="#000" stroke="none" stroke-width="1" />
<polygon points="915.3,895.5 903.8,899.5 903.8,891.5" fill="#000" stroke="none" stroke-width="1" />
<line x1="363.0" y1="918.7" x2="379.7" y2="872.7" stroke="#000" stroke-width="1.5" />
<line x1="372.4" y1="918.7" x2="388.4" y2="872.7" stroke="#000" stroke-width="1.5" />
<polygon points="281.1,410.8 610.8,434.2 611.6,421.8 281.9,398.4" fill="#fff" stroke="none" stroke-width="1" />
<line x1="281.1" y1="409.6" x2="610.8" y2="433.0" stroke="#5a5a5a" stroke-width="2.3" />
<line x1="281.1" y1="409.6" x2="610.8" y2="433.0" stroke="#111" stroke-width="2.3" stroke-dasharray="2.6 0.7 1.3 0.6 3.4 0.8 0.9 0.6"/>
<line x1="281.9" y1="399.6" x2="611.6" y2="423.0" stroke="#5a5a5a" stroke-width="2.3" />
<line x1="281.9" y1="399.6" x2="611.6" y2="423.0" stroke="#111" stroke-width="2.3" stroke-dasharray="2.6 0.7 1.3 0.6 3.4 0.8 0.9 0.6"/>
<line x1="610.8" y1="434.2" x2="611.6" y2="421.8" stroke="#222" stroke-width="1.5" />
<polygon points="1105.1,397.4 818.3,422.5 819.3,434.9 1106.1,409.8" fill="#fff" stroke="none" stroke-width="1" />
<line x1="1105.2" y1="398.6" x2="818.4" y2="423.7" stroke="#5a5a5a" stroke-width="2.3" />
<line x1="1105.2" y1="398.6" x2="818.4" y2="423.7" stroke="#111" stroke-width="2.3" stroke-dasharray="2.6 0.7 1.3 0.6 3.4 0.8 0.9 0.6"/>
<line x1="1106.0" y1="408.6" x2="819.2" y2="433.7" stroke="#5a5a5a" stroke-width="2.3" />
<line x1="1106.0" y1="408.6" x2="819.2" y2="433.7" stroke="#111" stroke-width="2.3" stroke-dasharray="2.6 0.7 1.3 0.6 3.4 0.8 0.9 0.6"/>
<line x1="1105.1" y1="397.4" x2="1106.1" y2="409.8" stroke="#222" stroke-width="1.5" />
<line x1="818.3" y1="422.5" x2="819.3" y2="434.9" stroke="#222" stroke-width="1.5" />
<line x1="259.0" y1="430.4" x2="274.9" y2="384.6" stroke="#000" stroke-width="3.9" />
<line x1="271.0" y1="431.2" x2="286.9" y2="385.4" stroke="#000" stroke-width="3.9" />
<line x1="714.5" y1="232.3" x2="714.5" y2="862.5" stroke="#999" stroke-width="2.9" stroke-dasharray="2.6 4.3 2.6 4.3 11.6 4.1 11.6 4.1 11.6 3.77"/>
<polyline points="153.5,121.3 195.0,136.7" fill="none" stroke="#111" stroke-width="1"/>
<polyline points="138.4,177.9 191.0,198.2" fill="none" stroke="#111" stroke-width="1"/>
<polyline points="148.4,267.7 190.1,283.0" fill="none" stroke="#111" stroke-width="1"/>
<polyline points="869.5,281.0 966.9,241.1" fill="none" stroke="#111" stroke-width="1"/>
<polyline points="860.3,306.0 961.6,326.7" fill="none" stroke="#111" stroke-width="1"/>
<polyline points="965.3,429.3 1062.7,464.8" fill="none" stroke="#111" stroke-width="1"/>
<polyline points="902.9,483.4 1045.7,542.4" fill="none" stroke="#111" stroke-width="1"/>
<polyline points="854.0,515.2 1030.7,587.4" fill="none" stroke="#111" stroke-width="1"/>
<polyline points="859.1,571.9 1036.2,644.5" fill="none" stroke="#111" stroke-width="1"/>
<polyline points="838.9,611.2 1022.9,686.0" fill="none" stroke="#111" stroke-width="1"/>
<polyline points="855.4,751.2 946.6,692.1 1025.1,726.1" fill="none" stroke="#111" stroke-width="1"/>
<polyline points="873.0,772.8 945.7,727.7 1023.9,761.7" fill="none" stroke="#111" stroke-width="1"/>
<polyline points="850.5,816.0 931.1,764.1 1017.7,803.7" fill="none" stroke="#111" stroke-width="1"/>
<polyline points="951.9,812.0 1019.8,845.1" fill="none" stroke="#111" stroke-width="1"/>
<polygon points="555.5,467.1 565.6,487.9 545.4,487.9" fill="#ffff00" stroke="#ff0d0d" stroke-width="2.2" stroke-linejoin="round"/>
<text x="555.7" y="485.0" font-size="10.3" text-anchor="middle" stroke="#000" stroke-width="0.3">3</text>
<polygon points="672.9,733.2 683.0,754.6 662.8,754.6" fill="#ffff00" stroke="#ff0d0d" stroke-width="2.2" stroke-linejoin="round"/>
<text x="673.1" y="751.7" font-size="10.3" text-anchor="middle" stroke="#000" stroke-width="0.3">2</text>
<polygon points="649.7,787.1 659.8,807.9 639.6,807.9" fill="#ffff00" stroke="#ff0d0d" stroke-width="2.2" stroke-linejoin="round"/>
<text x="649.9" y="805.0" font-size="10.3" text-anchor="middle" stroke="#000" stroke-width="0.3" font-family="Liberation Mono">1</text>
<polygon points="88.2,984.2 98.3,1005.7 78.1,1005.7" fill="#ffff00" stroke="#ff0d0d" stroke-width="2.2" stroke-linejoin="round"/>
<text x="88.4" y="1002.8" font-size="10.3" text-anchor="middle" stroke="#000" stroke-width="0.3" font-family="Liberation Mono">1</text>
<polygon points="88.2,1038.8 98.2,1059.8 78.1,1059.8" fill="#ffff00" stroke="#ff0d0d" stroke-width="2.2" stroke-linejoin="round"/>
<text x="88.4" y="1056.9" font-size="10.3" text-anchor="middle" stroke="#000" stroke-width="0.3">2</text>
<polygon points="88.2,1090.0 98.2,1110.9 78.1,1110.9" fill="#ffff00" stroke="#ff0d0d" stroke-width="2.2" stroke-linejoin="round"/>
<text x="88.4" y="1108.0" font-size="10.3" text-anchor="middle" stroke="#000" stroke-width="0.3">3</text>
<g transform="translate(1454.4,246.2) rotate(29.7)">
<rect x="-159.0" y="-26.75" width="318" height="53.5" rx="11" ry="11" fill="#ffe6ff" stroke="#ff66ff" stroke-width="4.2"/>
<text x="-132.3" y="9.3" font-size="23.5" textLength="264.6" lengthAdjust="spacingAndGlyphs" fill="#ff00cc">FORSLAG JULI 2014</text>
</g>
<text x="215.2" y="152.0" font-size="13.2" textLength="203.2" lengthAdjust="spacingAndGlyphs" xml:space="preserve">GPS-antenne. Festes med 2 stk</text>
<text x="215.2" y="167.3" font-size="13.2" textLength="152.3" lengthAdjust="spacingAndGlyphs" xml:space="preserve">rustfrie slangeklemmer.</text>
<text x="208.7" y="210.7" font-size="13.2" textLength="173.5" lengthAdjust="spacingAndGlyphs" xml:space="preserve">Trestolpe for GPS-antenna,</text>
<text x="208.7" y="227.0" font-size="13.2" textLength="224.3" lengthAdjust="spacingAndGlyphs" xml:space="preserve">51x51mm, 1.8m over grunn, 0.5m</text>
<text x="208.7" y="242.0" font-size="13.2" textLength="164.7" lengthAdjust="spacingAndGlyphs" xml:space="preserve">fundamentering i bakken.</text>
<text x="201.5" y="292.8" font-size="13.2" textLength="207.7" lengthAdjust="spacingAndGlyphs" xml:space="preserve">Kabelvern Ø30mm PE slange for</text>
<text x="201.5" y="309.1" font-size="13.2" textLength="223.4" lengthAdjust="spacingAndGlyphs" xml:space="preserve">GPS-kabel. Fest m/slangeklemmer</text>
<text x="201.5" y="323.8" font-size="13.2" textLength="201.9" lengthAdjust="spacingAndGlyphs" xml:space="preserve">langs stolpe. Åpning i kumvegg</text>
<text x="201.5" y="339.8" font-size="13.2" textLength="233.2" lengthAdjust="spacingAndGlyphs" xml:space="preserve">forsegles med f.eks. TEC-7, både på</text>
<text x="201.5" y="354.8" font-size="13.2" textLength="93.0" lengthAdjust="spacingAndGlyphs" xml:space="preserve">inn- og utside.</text>
<text x="985.4" y="241.2" font-size="13.2" textLength="207.1" lengthAdjust="spacingAndGlyphs" xml:space="preserve">Lokket (ikke vist) vil bli laget av</text>
<text x="985.4" y="257.0" font-size="13.2" textLength="177.6" lengthAdjust="spacingAndGlyphs" xml:space="preserve">glassfiberarmert plast, med</text>
<text x="985.4" y="273.2" font-size="13.2" textLength="281.2" lengthAdjust="spacingAndGlyphs" xml:space="preserve">kryssforsterkning sveist fast på undersiden.</text>
<text x="981.6" y="332.0" font-size="13.2" textLength="183.6" lengthAdjust="spacingAndGlyphs" xml:space="preserve">Muffe på øverste rørseksjon.</text>
<text x="1076.6" y="471.9" font-size="13.2" textLength="323.0" lengthAdjust="spacingAndGlyphs" xml:space="preserve">Kabelvern Ø50mm PE slange (NRF NR: 2396644),</text>
<text x="1076.6" y="487.0" font-size="13.2" textLength="330.7" lengthAdjust="spacingAndGlyphs" xml:space="preserve">5m, for kabel som går til stasjonsbygning. Åpning i</text>
<text x="1076.6" y="502.8" font-size="13.2" textLength="326.7" lengthAdjust="spacingAndGlyphs" xml:space="preserve">kumvegg forsegles med f.eks. TEC-7, både på inn-</text>
<text x="1076.6" y="518.0" font-size="13.2" textLength="64.0" lengthAdjust="spacingAndGlyphs" xml:space="preserve">og utside.</text>
<text x="1064.0" y="551.0" font-size="13.2" textLength="127.0" lengthAdjust="spacingAndGlyphs" xml:space="preserve">Tilbakefylte masser.</text>
<text x="1050.0" y="599.2" font-size="13.2" textLength="246.0" lengthAdjust="spacingAndGlyphs" xml:space="preserve">Rør nr. 2. Dim 1200mm, vekt 62,1 kg.</text>
<text x="1050.0" y="653.3" font-size="13.2" textLength="377.0" lengthAdjust="spacingAndGlyphs" xml:space="preserve">Muffe fast i rør nr. 1. Smøres innvendig med smøremiddel.</text>
<text x="1037.0" y="694.4" font-size="13.2" textLength="377.0" lengthAdjust="spacingAndGlyphs" xml:space="preserve">Rør nr.1  med innstøpt muffe. Dim 1200mm, vekt 62,1 kg.</text>
<text x="1039.6" y="733.0" font-size="13.2" textLength="145.8" lengthAdjust="spacingAndGlyphs" xml:space="preserve">Epoxy tettningsmasse.</text>
<text x="1036.9" y="771.8" font-size="13.2" textLength="276.8" lengthAdjust="spacingAndGlyphs" xml:space="preserve">Betongsåle trukket ca 25cm oppover røret.</text>
<text x="1033.0" y="805.6" font-size="13.2" textLength="320.7" lengthAdjust="spacingAndGlyphs" xml:space="preserve">Fundamentering 4 stk ca 5cm høye, vatres før rør</text>
<text x="1033.0" y="821.8" font-size="13.2" textLength="204.8" lengthAdjust="spacingAndGlyphs" xml:space="preserve">settes ned, justeres før støping.</text>
<text x="1033.0" y="857.9" font-size="13.2" textLength="78.5" lengthAdjust="spacingAndGlyphs" xml:space="preserve">Urørt grunn.</text>
<text x="121.4" y="997.6" font-size="13.2" textLength="114.9" lengthAdjust="spacingAndGlyphs">Betongsålen vil få</text>
<text x="240.8" y="997.6" font-size="13.2" textLength="115.9" lengthAdjust="spacingAndGlyphs">diameter 2.2m og</text>
<text x="361.2" y="997.6" font-size="13.2" textLength="97.4" lengthAdjust="spacingAndGlyphs">tykkelse 30cm.</text>
<text x="463.1" y="997.6" font-size="13.2" textLength="98.9" lengthAdjust="spacingAndGlyphs">Volumet blir da</text>
<text x="566.5" y="997.6" font-size="13.2" textLength="113.5" lengthAdjust="spacingAndGlyphs">(PI*1.1exp2*0.3)</text>
<text x="684.5" y="997.6" font-size="13.2" textLength="70.6" lengthAdjust="spacingAndGlyphs">= 1.14m3.</text>
<text x="759.6" y="997.6" font-size="13.2" textLength="168.8" lengthAdjust="spacingAndGlyphs">Produsenter av tørrbetong</text>
<text x="932.9" y="997.6" font-size="13.2" textLength="186.7" lengthAdjust="spacingAndGlyphs">oppgir gjerne at man får 12L</text>
<text x="121.4" y="1014.0" font-size="13.2" textLength="97.4" lengthAdjust="spacingAndGlyphs">betong pr sekk</text>
<text x="223.3" y="1014.0" font-size="13.2" textLength="47.9" lengthAdjust="spacingAndGlyphs">(25 kg)</text>
<text x="275.7" y="1014.0" font-size="13.2" textLength="110.7" lengthAdjust="spacingAndGlyphs">- altså trengs det</text>
<text x="390.9" y="1014.0" font-size="13.2" textLength="61.8" lengthAdjust="spacingAndGlyphs">minimum</text>
<text x="457.2" y="1014.0" font-size="13.2" textLength="78.5" lengthAdjust="spacingAndGlyphs">1140L/12L=</text>
<text x="540.2" y="1014.0" font-size="13.2" textLength="65.8" lengthAdjust="spacingAndGlyphs">95 sekker,</text>
<text x="610.5" y="1014.0" font-size="13.2" textLength="162.7" lengthAdjust="spacingAndGlyphs">en forsendelse som veier</text>
<text x="777.7" y="1014.0" font-size="13.2" textLength="51.3" lengthAdjust="spacingAndGlyphs">2375kg.</text>
<text x="121.4" y="1048.2" font-size="13.2" textLength="141.8" lengthAdjust="spacingAndGlyphs">Sensor må stå i vater.</text>
<text x="267.7" y="1048.2" font-size="13.2" textLength="101.9" lengthAdjust="spacingAndGlyphs">Betongoverflate</text>
<text x="374.1" y="1048.2" font-size="13.2" textLength="97.1" lengthAdjust="spacingAndGlyphs">inne i røret bør</text>
<text x="475.7" y="1048.2" font-size="13.2" textLength="87.9" lengthAdjust="spacingAndGlyphs">derfor glattes</text>
<text x="568.1" y="1048.2" font-size="13.2" textLength="88.4" lengthAdjust="spacingAndGlyphs">ut best mulig.</text>
<text x="661.0" y="1048.2" font-size="13.2" textLength="107.5" lengthAdjust="spacingAndGlyphs">Avrettingsmasse</text>
<text x="773.0" y="1048.2" font-size="13.2" textLength="135.5" lengthAdjust="spacingAndGlyphs">hadde vært ønskelig,</text>
<text x="913.0" y="1048.2" font-size="13.2" textLength="179.3" lengthAdjust="spacingAndGlyphs">men siden sensoren står på</text>
<text x="1096.8" y="1048.2" font-size="13.2" textLength="35.4" lengthAdjust="spacingAndGlyphs">3 ben</text>
<text x="121.4" y="1064.6" font-size="13.2" textLength="119.4" lengthAdjust="spacingAndGlyphs">som kan justeres i</text>
<text x="245.3" y="1064.6" font-size="13.2" textLength="106.2" lengthAdjust="spacingAndGlyphs">høyden gir dette</text>
<text x="356.0" y="1064.6" font-size="13.2" textLength="128.1" lengthAdjust="spacingAndGlyphs">mulighet for vatring</text>
<text x="488.6" y="1064.6" font-size="13.2" textLength="49.6" lengthAdjust="spacingAndGlyphs">selv om</text>
<text x="542.7" y="1064.6" font-size="13.2" textLength="70.6" lengthAdjust="spacingAndGlyphs">underlaget</text>
<text x="617.8" y="1064.6" font-size="13.2" textLength="83.9" lengthAdjust="spacingAndGlyphs">er litt ujevnt,</text>
<text x="706.2" y="1064.6" font-size="13.2" textLength="147.3" lengthAdjust="spacingAndGlyphs">eller er svakt hellende.</text>
<text x="119.4" y="1100.6" font-size="13.2" textLength="171.0" lengthAdjust="spacingAndGlyphs">Sensor bør ha minst mulig</text>
<text x="294.9" y="1100.6" font-size="13.2" textLength="136.1" lengthAdjust="spacingAndGlyphs">temperaturvariasjon.</text>
<text x="435.5" y="1100.6" font-size="13.2" textLength="81.7" lengthAdjust="spacingAndGlyphs">Som termisk</text>
<text x="521.7" y="1100.6" font-size="13.2" textLength="56.2" lengthAdjust="spacingAndGlyphs">isolasjon</text>
<text x="582.4" y="1100.6" font-size="13.2" textLength="106.7" lengthAdjust="spacingAndGlyphs">er det ofte brukt</text>
<text x="693.6" y="1100.6" font-size="13.2" textLength="139.9" lengthAdjust="spacingAndGlyphs">XPS-plater 2 X 50mm</text>
<text x="838.0" y="1100.6" font-size="13.2" textLength="94.8" lengthAdjust="spacingAndGlyphs">skåret i striper</text>
<text x="937.3" y="1100.6" font-size="13.2" textLength="166.0" lengthAdjust="spacingAndGlyphs">200mm brede på utsiden,</text>
<text x="119.4" y="1116.3" font-size="13.2" textLength="123.2" lengthAdjust="spacingAndGlyphs">og låst ytterst med</text>
<text x="247.1" y="1116.3" font-size="13.2" textLength="39.8" lengthAdjust="spacingAndGlyphs">Platon</text>
<text x="291.4" y="1116.3" font-size="13.2" textLength="107.2" lengthAdjust="spacingAndGlyphs">grunnmursplate.</text>
<text x="403.1" y="1116.3" font-size="13.2" textLength="64.6" lengthAdjust="spacingAndGlyphs">Men siden</text>
<text x="472.2" y="1116.3" font-size="13.2" textLength="70.1" lengthAdjust="spacingAndGlyphs">HOPEN har</text>
<text x="546.8" y="1116.3" font-size="13.2" textLength="43.0" lengthAdjust="spacingAndGlyphs">stabile</text>
<text x="594.3" y="1116.3" font-size="13.2" textLength="125.5" lengthAdjust="spacingAndGlyphs">temperaturforhold i</text>
<text x="724.3" y="1116.3" font-size="13.2" textLength="118.2" lengthAdjust="spacingAndGlyphs">grunnen kan disse</text>
<text x="847.0" y="1116.3" font-size="13.2" textLength="48.0" lengthAdjust="spacingAndGlyphs">sløyfes.</text>
<text x="679.0" y="205.0" font-size="17" textLength="71.0" lengthAdjust="spacingAndGlyphs">1 370mm</text>
<text x="284.4" y="887.7" font-size="17" textLength="66.3" lengthAdjust="spacingAndGlyphs">3000mm</text>
<text x="677.8" y="889.1" font-size="17" textLength="70.8" lengthAdjust="spacingAndGlyphs">2 000mm</text>
<text transform="translate(510.2,364.3) rotate(-90)" font-size="16.2" textLength="57.3" lengthAdjust="spacingAndGlyphs">400mm</text>
<text transform="translate(511.5,644.2) rotate(-90)" font-size="16.2" textLength="71.7" lengthAdjust="spacingAndGlyphs">2 100mm</text>
<text transform="translate(739.3,820.4) rotate(-90)" font-size="16.2" textLength="56.4" lengthAdjust="spacingAndGlyphs">300mm</text>
</svg>
</body></html>
